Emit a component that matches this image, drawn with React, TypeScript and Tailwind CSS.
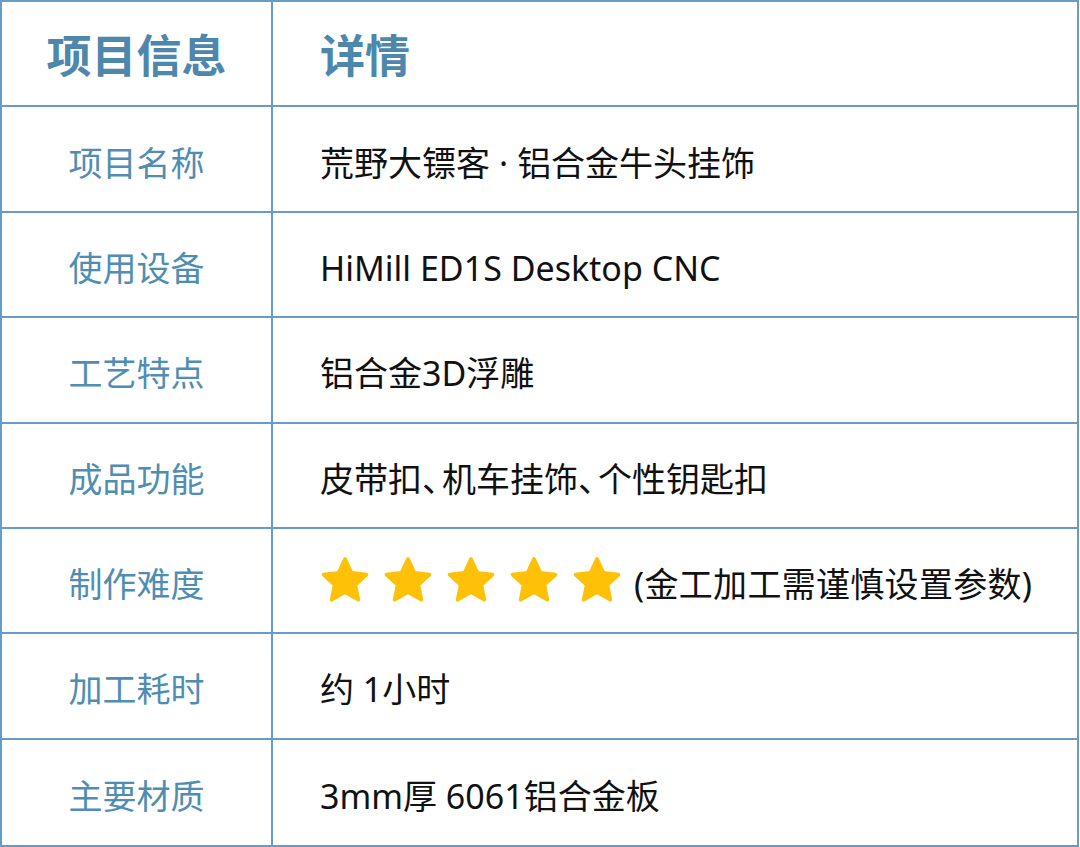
const rows: { label: string; value: React.ReactNode; stars?: boolean }[] = [
  {
    label: "项目名称",
    value: (
      <>
        荒野大镖客<span className="px-[9px]">·</span>铝合金牛头挂饰
      </>
    ),
  },
  { label: "使用设备", value: "HiMill ED1S Desktop CNC" },
  { label: "工艺特点", value: "铝合金3D浮雕" },
  {
    label: "成品功能",
    value: (
      <>
        皮带扣<span className="tracking-[-14px]">、</span>机车挂饰
        <span className="tracking-[-14px]">、</span>个性钥匙扣
      </>
    ),
  },
  { label: "制作难度", value: "(金工加工需谨慎设置参数)", stars: true },
  { label: "加工耗时", value: "约 1小时" },
  { label: "主要材质", value: "3mm厚 6061铝合金板" },
];

const Star = () => (
  <svg viewBox="0 0 24 24" className="w-[56px] h-[56px] shrink-0">
    <path
      fill="#FFC107"
      stroke="#FFC107"
      strokeWidth="1.6"
      strokeLinejoin="round"
      d="M12 2.6l2.75 5.9 6.45.75-4.78 4.4 1.28 6.37L12 16.8l-5.7 3.22 1.28-6.37-4.78-4.4 6.45-.75z"
    />
  </svg>
);

export default function App() {
  return (
    <div
      className="w-[1080px] h-[847px] bg-white"
      style={{ fontFamily: '"Noto Sans", "Noto Sans CJK SC", sans-serif' }}
    >
      <div className="grid grid-cols-[271px_1fr] grid-rows-8 w-[1079px] h-[847px] border-2 border-[#6a9bc3]">
        <div className="flex items-center justify-center pt-[4px] border-r-2 border-b-2 border-[#6a9bc3] text-[45px] font-bold text-[#4d87ab]">
          项目信息
        </div>
        <div className="flex items-center pl-[47px] pt-[4px] border-b-2 border-[#6a9bc3] text-[45px] font-bold text-[#4d87ab]">
          详情
        </div>
        {rows.map((r, i) => {
          const last = i === rows.length - 1;
          return (
            <div key={r.label} className="contents">
              <div
                className={`flex items-center justify-center pt-[8px] border-r-2 border-[#6a9bc3] text-[34px] text-[#4f8db2] ${
                  last ? "" : "border-b-2"
                }`}
              >
                {r.label}
              </div>
              <div
                className={`flex items-center pl-[47px] border-[#6a9bc3] text-[34px] text-[#111] ${
                  last ? "" : "border-b-2"
                }`}
              >
                {r.stars && (
                  <div className="flex items-center gap-[7px] ml-[-3px] mr-[9px]">
                    <Star />
                    <Star />
                    <Star />
                    <Star />
                    <Star />
                  </div>
                )}
                <span className={`pt-[8px] ${r.stars ? "tracking-[0.3px]" : ""}`}>{r.value}</span>
              </div>
            </div>
          );
        })}
      </div>
    </div>
  );
}
